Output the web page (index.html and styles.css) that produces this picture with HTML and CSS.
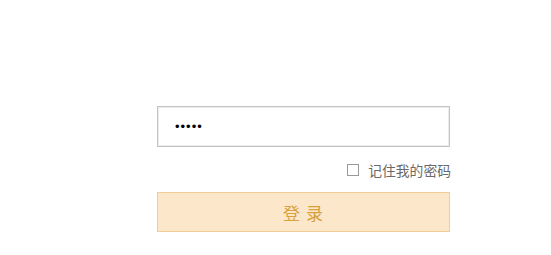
FILE: index.html
```html
<!DOCTYPE html>
<html lang="zh">
<head>
<meta charset="utf-8">
<title>登录</title>
<link rel="stylesheet" href="styles.css">
</head>
<body>
<form class="login">
  <input class="pwd" type="password" value="12345">
  <label class="remember">
    <span class="box"></span>
    <span class="remember-text">记住我的密码</span>
  </label>
  <button class="submit" type="button">登 录</button>
</form>
</body>
</html>
```
FILE: styles.css
```css
html, body {
  margin: 0;
  padding: 0;
  background: #ffffff;
}
body {
  font-family: "Noto Sans CJK SC", "Liberation Sans", sans-serif;
}
.login {
  width: 293px;
  margin: 106px 0 0 157px;
  display: flex;
  flex-direction: column;
}
.pwd {
  box-sizing: border-box;
  width: 293px;
  height: 41px;
  margin: 0;
  border: 1px solid #c4c4c4;
  box-shadow: inset 0 0 0 1px #ececec;
  padding: 0 0 0 17px;
  font-size: 13px;
  font-family: "Liberation Sans", sans-serif;
  letter-spacing: 1px;
  color: #000;
  outline: none;
}
.remember {
  display: flex;
  align-items: center;
  justify-content: flex-end;
  gap: 9px;
  margin-top: 16px;
  height: 14px;
  margin-right: -1px;
}
.box {
  box-sizing: border-box;
  width: 12px;
  height: 12px;
  border: 1px solid #9a9a9a;
  background: #fff;
}
.remember-text {
  font-size: 13.8px;
  color: #6a6a6a;
  line-height: 14px;
}
.submit {
  box-sizing: border-box;
  width: 293px;
  height: 40px;
  margin-top: 15px;
  background: #fde7cb;
  border: 1px solid #f1cd98;
  color: #d6a03c;
  font-family: "Noto Sans CJK SC", sans-serif;
  font-size: 17px;
  letter-spacing: 1px;
  padding: 0;
  cursor: pointer;
}
```
